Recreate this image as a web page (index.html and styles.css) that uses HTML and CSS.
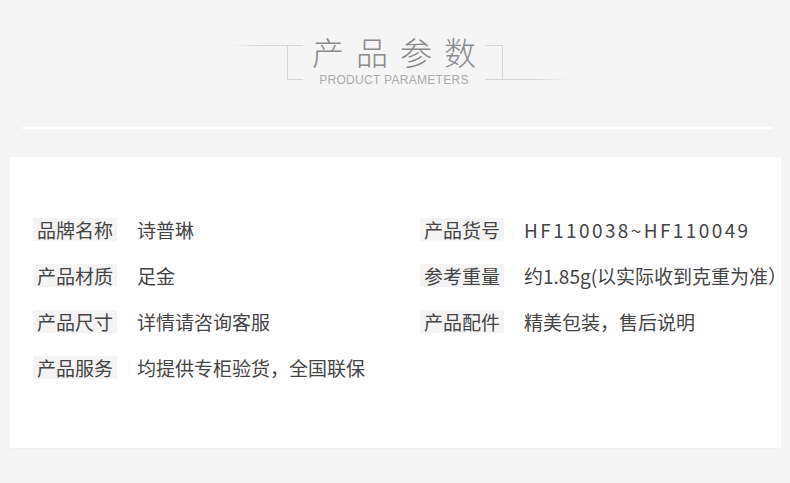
FILE: index.html
```html
<!DOCTYPE html>
<html lang="zh-CN">
<head>
    <meta charset="UTF-8">
    <title>产品参数</title>
    <link rel="stylesheet" href="styles.css">
</head>
<body>
    <div class="heading">
        <div class="deco deco-left"><span class="bracket"></span></div>
        <div class="heading-text">
            <h1>产品参数</h1>
            <p class="sub">PRODUCT PARAMETERS</p>
        </div>
        <div class="deco deco-right"><span class="bracket"></span></div>
    </div>

    <div class="divider"></div>

    <div class="card">
        <div class="params">
            <div class="row"><span class="label">品牌名称</span><span class="value">诗普琳</span></div>
            <div class="row"><span class="label">产品货号</span><span class="value code">HF110038~HF110049</span></div>
            <div class="row"><span class="label">产品材质</span><span class="value">足金</span></div>
            <div class="row"><span class="label">参考重量</span><span class="value">约1.85g(以实际收到克重为准）</span></div>
            <div class="row"><span class="label">产品尺寸</span><span class="value">详情请咨询客服</span></div>
            <div class="row"><span class="label">产品配件</span><span class="value">精美包装，售后说明</span></div>
            <div class="row"><span class="label">产品服务</span><span class="value">均提供专柜验货，全国联保</span></div>
        </div>
    </div>
</body>
</html>
```

FILE: styles.css
```css
body {
    margin: 0;
    background: #f5f5f5;
    font-family: 'Liberation Sans', 'Noto Sans CJK SC', sans-serif;
    color: #333;
}
.heading {
    display: flex;
    justify-content: center;
    align-items: flex-start;
    padding-top: 35px;
    padding-left: 10px;
}
.deco {
    height: 34px;
    margin-top: 10px;
    display: flex;
    flex-shrink: 0;
}
.deco-left {
    width: 70px;
    justify-content: flex-end;
    border-top: 1px solid;
    border-image: linear-gradient(to right, rgba(216,216,216,0), #d6d6d6 40%) 1;
}
.deco-left .bracket {
    width: 15px;
    border-left: 1px solid #d6d6d6;
    border-bottom: 1px solid #d6d6d6;
}
.deco-right {
    width: 82px;
    justify-content: flex-start;
    border-bottom: 1px solid;
    border-image: linear-gradient(to left, rgba(216,216,216,0), #d6d6d6 40%) 1;
}
.deco-right .bracket {
    width: 17px;
    border-top: 1px solid #d6d6d6;
    border-right: 1px solid #d6d6d6;
}
.heading-text {
    width: 182px;
    flex-shrink: 0;
    text-align: center;
    white-space: nowrap;
}
h1 {
    margin: 0 -10px;
    font-family: 'Noto Sans CJK SC', sans-serif;
    font-size: 32px;
    font-weight: 300;
    line-height: 32px;
    letter-spacing: 12px;
    padding-left: 12px;
    color: #8a8a8a;
}
.sub {
    margin: 6px -10px 0;
    font-size: 12px;
    line-height: 14px;
    letter-spacing: 0.3px;
    color: #aaa;
}
.divider {
    margin: 40px 17px 0 22px;
    height: 2px;
    background: #fff;
}
.card {
    margin: 28px 9px 0 10px;
    height: 292px;
    background: #fff;
    box-sizing: border-box;
    padding: 61px 0 0 23px;
    border-bottom: 1px solid #f0f0f0;
}
.params {
    display: grid;
    grid-template-columns: 387px 1fr;
    row-gap: 23px;
}
.row {
    display: flex;
    align-items: center;
    gap: 20px;
    height: 23px;
}
.label {
    flex-shrink: 0;
    background: #f4f4f4;
    padding: 0 4px;
    font-family: 'Noto Sans CJK SC', sans-serif;
    font-size: 19px;
    line-height: 23px;
    color: #444;
    white-space: nowrap;
}
.value {
    font-family: 'Noto Sans CJK SC', sans-serif;
    font-size: 19px;
    line-height: 23px;
    color: #444;
    white-space: nowrap;
}
.code {
    letter-spacing: 2.4px;
}
```
